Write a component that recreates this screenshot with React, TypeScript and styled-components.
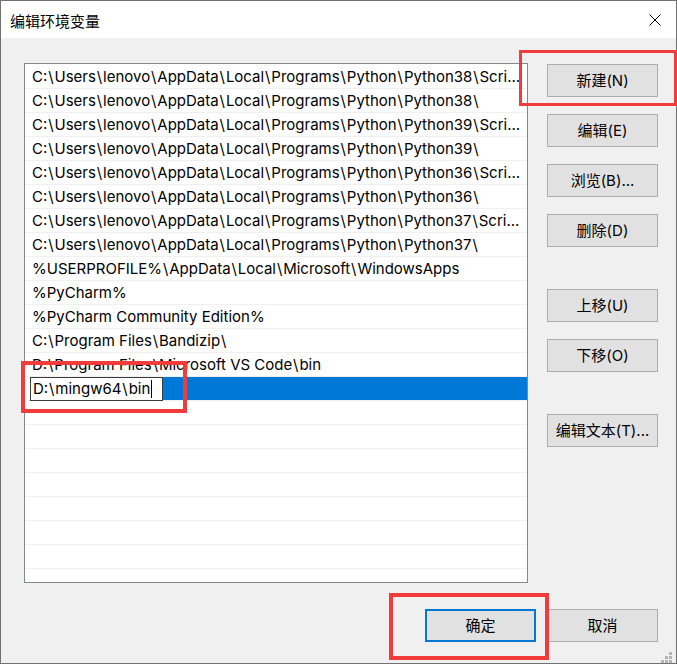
import React from "react";
import styled, { createGlobalStyle } from "styled-components";

const GlobalStyle = createGlobalStyle`
  html, body { margin: 0; padding: 0; background: #f0f0f0; overflow: hidden; }
  body { font-family: "Inter", "Noto Sans CJK SC", sans-serif; }
  * { box-sizing: border-box; }
`;

const Window = styled.div`
  position: relative;
  width: 677px;
  height: 664px;
  border: 1px solid #717171;
  background: #f0f0f0;
  display: flex;
  flex-direction: column;
  font-family: "Inter", "Noto Sans CJK SC", sans-serif;
  font-size: 15px;
  color: #000;
`;

const TitleBar = styled.div`
  height: 37px;
  background: #ffffff;
  display: flex;
  align-items: center;
  justify-content: space-between;
  padding: 0 15px 0 9px;
`;

const Title = styled.div`
  font-family: "Noto Sans CJK SC", sans-serif;
  font-size: 15px;
  line-height: 1;
  padding-top: 1px;
`;

const CloseIcon = styled.svg`
  display: block;
  width: 12px;
  height: 12px;
  margin-top: 1px;
`;

const Body = styled.div`
  display: flex;
  align-items: flex-start;
  gap: 19px;
  padding: 25px 0 0 23px;
`;

const ListBox = styled.div`
  width: 504px;
  height: 520px;
  border: 1px solid #828790;
  background: #ffffff;
  padding-top: 1px;
  overflow: hidden;
`;

const Row = styled.div<{ $selected?: boolean }>`
  display: flex;
  align-items: flex-start;
  height: 24px;
  border-bottom: 1px solid #f0f0f0;
  padding-left: ${(p) => (p.$selected ? "5px" : "7px")};
  line-height: 23px;
  white-space: nowrap;
  overflow: visible;
  background: ${(p) =>
    p.$selected ? "linear-gradient(to right, #ffffff 5px, #0078d7 5px)" : "#ffffff"};
`;

const RowText = styled.span`
  display: block;
  overflow: hidden;
  max-width: 512px;
`;

const Sep = styled.span`
  padding: 0 0.9px;
`;

const EditBox = styled.div`
  width: 133px;
  height: 24px;
  border: 1px solid #3a3a3a;
  background: #ffffff;
  display: flex;
  align-items: center;
  padding-left: 2px;
  line-height: 22px;
  position: relative;
  z-index: 1;
`;

const Caret = styled.span`
  display: inline-block;
  width: 0;
  height: 18px;
  border-left: 1px solid #000;
  margin-left: 1px;
`;

const SideColumn = styled.div`
  display: flex;
  flex-direction: column;
  gap: 42px;
  margin-top: 1px;
`;

const ButtonGroup = styled.div`
  display: flex;
  flex-direction: column;
  gap: 17px;
`;

const Button = styled.button<{ $primary?: boolean }>`
  width: 111px;
  height: 33px;
  margin: 0;
  padding: 0;
  background: #e1e1e1;
  border: ${(p) => (p.$primary ? "2px solid #0078d7" : "1px solid #adadad")};
  font-family: "Inter", "Noto Sans CJK SC", sans-serif;
  font-size: 15px;
  color: #000;
  line-height: 1;
  display: flex;
  align-items: center;
  justify-content: center;
`;

const Footer = styled.div`
  display: flex;
  justify-content: flex-end;
  gap: 11px;
  padding: 26px 18px 0 0;
`;

const Marker = styled.div<{ $w: number }>`
  position: absolute;
  border: ${(p) => p.$w}px solid #f23b3b;
  pointer-events: none;
`;

const Grip = styled.svg`
  position: absolute;
  right: 4px;
  bottom: 0px;
  width: 11px;
  height: 12px;
`;

function PathText({ text }: { text: string }) {
  const parts = text.split("\\");
  return (
    <>
      {parts.map((p, i) => (
        <React.Fragment key={i}>
          {p}
          {i < parts.length - 1 && <Sep>\</Sep>}
        </React.Fragment>
      ))}
    </>
  );
}

const entries = [
  "C:\\Users\\lenovo\\AppData\\Local\\Programs\\Python\\Python38\\Scri...",
  "C:\\Users\\lenovo\\AppData\\Local\\Programs\\Python\\Python38\\",
  "C:\\Users\\lenovo\\AppData\\Local\\Programs\\Python\\Python39\\Scri...",
  "C:\\Users\\lenovo\\AppData\\Local\\Programs\\Python\\Python39\\",
  "C:\\Users\\lenovo\\AppData\\Local\\Programs\\Python\\Python36\\Scri...",
  "C:\\Users\\lenovo\\AppData\\Local\\Programs\\Python\\Python36\\",
  "C:\\Users\\lenovo\\AppData\\Local\\Programs\\Python\\Python37\\Scri...",
  "C:\\Users\\lenovo\\AppData\\Local\\Programs\\Python\\Python37\\",
  "%USERPROFILE%\\AppData\\Local\\Microsoft\\WindowsApps",
  "%PyCharm%",
  "%PyCharm Community Edition%",
  "C:\\Program Files\\Bandizip\\",
  "D:\\Program Files\\Microsoft VS Code\\bin",
];

const emptyRows = 8;

export default function App() {
  return (
    <>
      <GlobalStyle />
      <Window>
        <TitleBar>
          <Title>编辑环境变量</Title>
          <CloseIcon viewBox="0 0 12 12">
            <path d="M0.5 0.5 L11.5 11.5 M11.5 0.5 L0.5 11.5" stroke="#000" strokeWidth="1" fill="none" />
          </CloseIcon>
        </TitleBar>
        <Body>
          <ListBox>
            {entries.map((e, i) => (
              <Row key={i}>
                <RowText>
                  <PathText text={e} />
                </RowText>
              </Row>
            ))}
            <Row $selected>
              <EditBox>
                <PathText text="D:\mingw64\bin" />
                <Caret />
              </EditBox>
            </Row>
            {Array.from({ length: emptyRows }).map((_, i) => (
              <Row key={"e" + i} />
            ))}
          </ListBox>
          <SideColumn>
            <ButtonGroup>
              <Button>新建(N)</Button>
              <Button>编辑(E)</Button>
              <Button>浏览(B)...</Button>
              <Button>删除(D)</Button>
            </ButtonGroup>
            <ButtonGroup>
              <Button>上移(U)</Button>
              <Button>下移(O)</Button>
            </ButtonGroup>
            <ButtonGroup>
              <Button>编辑文本(T)...</Button>
            </ButtonGroup>
          </SideColumn>
        </Body>
        <Footer>
          <Button $primary>确定</Button>
          <Button>取消</Button>
        </Footer>
        <Grip viewBox="0 0 11 12">
          <rect x="8" y="1" width="3" height="3" fill="#b5b5b5" />
          <rect x="4" y="5" width="3" height="3" fill="#b5b5b5" />
          <rect x="8" y="5" width="3" height="3" fill="#b5b5b5" />
          <rect x="0" y="9" width="3" height="3" fill="#b5b5b5" />
          <rect x="4" y="9" width="3" height="3" fill="#b5b5b5" />
          <rect x="8" y="9" width="3" height="3" fill="#b5b5b5" />
        </Grip>
        <Marker $w={3} style={{ left: 518, top: 49, width: 158, height: 56 }} />
        <Marker $w={4} style={{ left: 20, top: 360, width: 166, height: 52 }} />
        <Marker $w={4} style={{ left: 388, top: 592, width: 160, height: 67 }} />
      </Window>
    </>
  );
}
